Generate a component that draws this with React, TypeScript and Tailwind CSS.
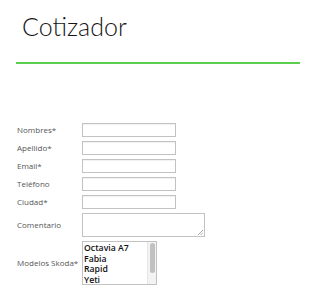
import React from "react";

const fields = ["Nombres*", "Apellido*", "Email*", "Teléfono", "Ciudad*"];
const modelos = ["Octavia A7", "Fabia", "Rapid", "Yeti"];

export default function App() {
  return (
    <div className="w-[300px] h-[289px] bg-white overflow-hidden font-['Open_Sans',Arial,sans-serif]">
      <div className="pl-[16px] pt-[14px]">
        <h1 className="pl-[6px] font-['Lato',sans-serif] text-[25px] leading-[25px] text-[#151515] font-light">Cotizador</h1>
        <div className="mt-[23px] h-[2px] bg-[#5bcf4d]" />
      </div>
      <div className="pl-[17px] pt-[59px] flex flex-col gap-[4px]">
        {fields.map((f) => (
          <div key={f} className="flex items-center h-[14px]">
            <span className="w-[65px] text-[8px] leading-[10px] text-[#555]">{f}</span>
            <div className="w-[94px] h-[14px] border border-[#c2c2c2] shadow-[inset_0_1px_1px_rgba(0,0,0,0.06)] bg-white" />
          </div>
        ))}
        <div className="flex items-center h-[24px]">
          <span className="w-[65px] text-[8px] leading-[10px] text-[#555]">Comentario</span>
          <div className="relative w-[123px] h-[24px] border border-[#c2c2c2] bg-white">
            <svg className="absolute right-[1px] bottom-[1px]" width="6" height="6" viewBox="0 0 6 6">
              <line x1="1" y1="6" x2="6" y2="1" stroke="#999" strokeWidth="0.8" />
              <line x1="3.5" y1="6" x2="6" y2="3.5" stroke="#999" strokeWidth="0.8" />
            </svg>
          </div>
        </div>
        <div className="flex items-center h-[44px]">
          <span className="w-[65px] text-[8px] leading-[10px] text-[#555]">Modelos Skoda*</span>
          <div className="flex w-[75px] h-[44px] border border-[#c2c2c2] bg-white">
            <div className="flex-1 pl-[1px] pt-[1px] flex flex-col">
              {modelos.map((m) => (
                <span key={m} className="text-[8.7px] leading-[10.5px] text-[#111] font-semibold">{m}</span>
              ))}
            </div>
            <div className="w-[9px] bg-[#f3f3f3] border-l border-[#e6e6e6] pt-[1px] flex justify-center">
              <div className="w-[5px] h-[30px] rounded-[3px] bg-[#c1c1c1]" />
            </div>
          </div>
        </div>
      </div>
    </div>
  );
}
